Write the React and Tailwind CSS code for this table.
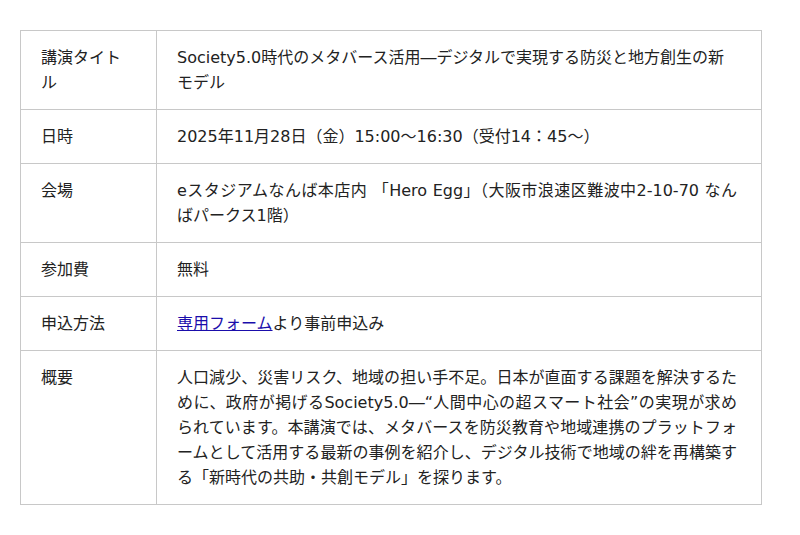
export default function App() {
  const rows = [
    ["講演タイトル", "Society5.0時代のメタバース活用―デジタルで実現する防災と地方創生の新モデル", false],
    ["日時", "2025年11月28日（金）15:00～16:30（受付14：45～）", true],
    ["会場", "eスタジアムなんば本店内 「Hero Egg」（大阪市浪速区難波中2-10-70 なんばパークス1階）", true],
    ["参加費", "無料", true],
    ["申込方法", null, true],
    ["概要", "人口減少、災害リスク、地域の担い手不足。日本が直面する課題を解決するために、政府が掲げるSociety5.0―“人間中心の超スマート社会”の実現が求められています。本講演では、メタバースを防災教育や地域連携のプラットフォームとして活用する最新の事例を紹介し、デジタル技術で地域の絆を再構築する「新時代の共助・共創モデル」を探ります。", true],
  ];
  return (
    <div className="bg-white min-h-[535px] pt-[30px] pl-[20px]" style={{ fontFamily: '"DejaVu Sans", "Noto Sans CJK JP", sans-serif' }}>
      <table className="w-[742px] border-collapse text-[16px] leading-[25px] text-[#222]">
        <tbody>
          {rows.map(([label, value, justify], i) => (
            <tr key={i}>
              <td className="w-[136px] border border-[#c8c8c8] px-[20px] py-[14px] align-top text-left">{label}</td>
              <td className={"border border-[#c8c8c8] pl-[20px] pr-[24px] py-[14px] align-top " + (justify ? "text-justify" : "text-left")}>
                {value === null ? (
                  <>
                    <a href="#" className="text-[#1a0dab] underline">専用フォーム</a>より事前申込み
                  </>
                ) : (
                  value
                )}
              </td>
            </tr>
          ))}
        </tbody>
      </table>
    </div>
  );
}
